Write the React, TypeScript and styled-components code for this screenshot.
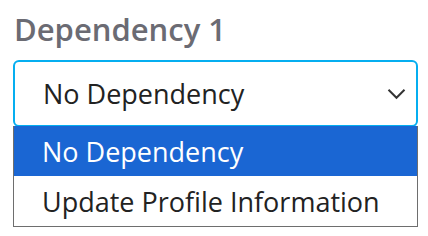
import React from "react";
import styled, { createGlobalStyle } from "styled-components";

const Global = createGlobalStyle`
  html, body { margin: 0; padding: 0; background: #ffffff; }
  body { font-family: "Open Sans", "Liberation Sans", sans-serif; }
`;

const Wrap = styled.div`
  display: flex;
  flex-direction: column;
  padding: 8px 10px 0 13px;
  width: 405px;
`;

const Label = styled.div`
  font-size: 31px;
  font-weight: 600;
  color: #6b6b73;
  line-height: 42px;
  padding-left: 1px;
  margin-bottom: 10px;
`;

const Field = styled.div`
  display: flex;
  flex-direction: column;
`;

const Box = styled.div`
  box-sizing: border-box;
  height: 67px;
  border: 2px solid #05aef0;
  border-radius: 6px;
  display: flex;
  align-items: center;
  justify-content: space-between;
  padding: 0 10px 0 28px;
  font-size: 27px;
  color: #222222;
`;

const Menu = styled.div`
  box-sizing: border-box;
  border: 1px solid #6e6e6e;
  border-top: none;
  margin-top: -1px;
  display: flex;
  flex-direction: column;
`;

const Option = styled.div<{ $active?: boolean }>`
  height: 50px;
  display: flex;
  align-items: center;
  padding-left: 28px;
  font-size: 27px;
  background: ${(p) => (p.$active ? "#1a66d3" : "#ffffff")};
  color: ${(p) => (p.$active ? "#ffffff" : "#222222")};
`;

const Chevron = () => (
  <svg width="19" height="12" viewBox="0 0 19 12">
    <path d="M1.5 1.8 L9.5 9.8 L17.5 1.8" fill="none" stroke="#333" strokeWidth="2" />
  </svg>
);

export default function App() {
  return (
    <>
      <Global />
      <Wrap>
        <Label>Dependency 1</Label>
        <Field>
          <Box>
            <span>No Dependency</span>
            <Chevron />
          </Box>
          <Menu>
            <Option $active>No Dependency</Option>
            <Option>Update Profile Information</Option>
          </Menu>
        </Field>
      </Wrap>
    </>
  );
}
